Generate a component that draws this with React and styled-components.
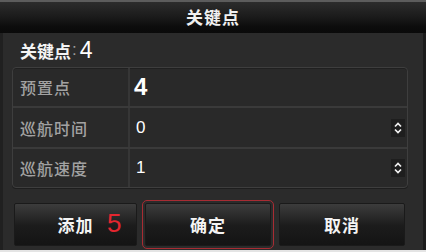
import React from "react";
import styled, { createGlobalStyle } from "styled-components";

const Global = createGlobalStyle`
  html, body { margin: 0; padding: 0; background: #e4e4e4; }
  body { width: 426px; height: 252px; overflow: hidden; }
  #root { width: 426px; }
`;

const FONT = `"Liberation Sans", "Noto Sans CJK SC", sans-serif`;

const Window = styled.div`
  width: 426px;
  height: 250px;
  display: flex;
  flex-direction: column;
  background: #2b2b2b;
  box-shadow: inset 3px 0 0 #202020, inset -3px 0 0 #1b1b1b;
  font-family: ${FONT};
  color: #f0f0f0;
`;

const TitleBar = styled.div`
  flex: none;
  display: flex;
  align-items: center;
  justify-content: center;
  border-top: 2px solid #5c5c5c;
  background: linear-gradient(#2c2c2c 0%, #1c1c1c 45%, #0c0c0c 80%, #0a0a0a 100%);
  font-size: 17px;
  font-weight: 700;
  letter-spacing: 1px;
  padding-bottom: 3px;
  box-sizing: border-box;
  height: 33px;
`;

const Heading = styled.div`
  height: 34px;
  flex: none;
  display: flex;
  align-items: center;
  padding-left: 20px;
  font-size: 17px;
  font-weight: 700;
  color: #f4f4f4;
`;

const Colon = styled.span`
  color: #9a9a9a;
  font-weight: 400;
  margin: 0 3px 0 1px;
`;

const HeadNum = styled.span`
  font-size: 23px;
  font-weight: 400;
  color: #ffffff;
`;

const Table = styled.div`
  margin: 0 18px 0 12px;
  border: 1px solid #3e3e3e;
  border-radius: 4px;
  background: #292929;
  box-shadow: 0 1px 0 #1e1e1e, inset 0 1px 0 #202020;
  display: flex;
  flex-direction: column;
`;

const Row = styled.div`
  display: grid;
  grid-template-columns: 117px 1fr;
  height: ${(p) => p.$h}px;
  border-top: ${(p) => (p.$first ? "none" : "2px solid #3a3a3a")};
  box-sizing: border-box;
`;

const Label = styled.div`
  display: flex;
  align-items: center;
  padding-left: 7px;
  border-right: 2px solid #363636;
  font-size: 16px;
  letter-spacing: 1px;
  color: #a2a2a2;
  font-weight: 500;
`;

const Value = styled.div`
  display: flex;
  align-items: center;
  justify-content: space-between;
  padding: 0 2px 0 ${(p) => (p.$big ? 4 : 6)}px;
  font-size: ${(p) => (p.$big ? 24 : 17)}px;
  font-weight: ${(p) => (p.$big ? 700 : 400)};
  color: #ffffff;
`;

const SpinBox = styled.div`
  width: 14px;
  height: 18px;
  background: #1e1e1e;
  display: flex;
  align-items: center;
  justify-content: center;
`;

const Buttons = styled.div`
  display: flex;
  gap: 8px;
  padding-left: 14px;
  margin-top: 15px;
`;

const ButtonWrap = styled.div`
  position: relative;
  width: ${(p) => p.$w}px;
  height: 43px;
`;

const Button = styled.div`
  width: 100%;
  height: 100%;
  display: flex;
  align-items: center;
  justify-content: center;
  box-sizing: border-box;
  border: 1px solid #1a1a1a;
  border-radius: 2px;
  background: linear-gradient(#3c3c3c 0%, #2a2a2a 30%, #1c1c1c 52%, #141414 100%);
  font-size: 17px;
  font-weight: 700;
  letter-spacing: 1px;
  color: #f4f4f4;
  outline: ${(p) => (p.$selected ? "1px solid #a82c33" : "none")};
  outline-offset: 2px;
`;

const Marker = styled.span`
  position: absolute;
  left: 93px;
  top: 5px;
  font-family: "Liberation Sans", sans-serif;
  font-size: 26px;
  color: #e4262f;
`;

const Spin = () => (
  <SpinBox>
    <svg width="10" height="14" viewBox="0 0 10 14" fill="none">
      <path d="M2 5.5 L5 2.5 L8 5.5" stroke="#f2f2f2" strokeWidth="1.7" />
      <path d="M2 8.5 L5 11.5 L8 8.5" stroke="#f2f2f2" strokeWidth="1.7" />
    </svg>
  </SpinBox>
);

export default function App() {
  return (
    <>
      <Global />
      <Window>
        <TitleBar>关键点</TitleBar>
        <Heading>
          关键点<Colon>:</Colon>
          <HeadNum>4</HeadNum>
        </Heading>
        <Table>
          <Row $h={38} $first>
            <Label>预置点</Label>
            <Value $big>4</Value>
          </Row>
          <Row $h={41}>
            <Label>巡航时间</Label>
            <Value>
              0<Spin />
            </Value>
          </Row>
          <Row $h={40}>
            <Label>巡航速度</Label>
            <Value>
              1<Spin />
            </Value>
          </Row>
        </Table>
        <Buttons>
          <ButtonWrap $w={123}>
            <Button>添加</Button>
            <Marker>5</Marker>
          </ButtonWrap>
          <ButtonWrap $w={126}>
            <Button $selected>确定</Button>
          </ButtonWrap>
          <ButtonWrap $w={126}>
            <Button>取消</Button>
          </ButtonWrap>
        </Buttons>
      </Window>
    </>
  );
}
